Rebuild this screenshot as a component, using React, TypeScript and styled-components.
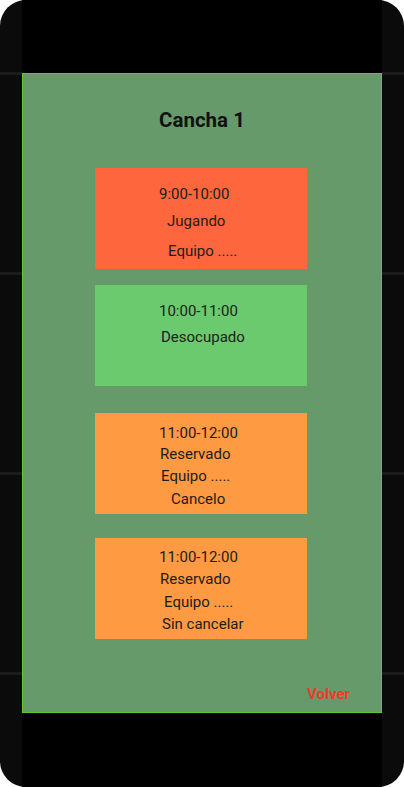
import React from "react";
import styled, { createGlobalStyle } from "styled-components";

const Global = createGlobalStyle`
  html, body { margin: 0; padding: 0; background: #ffffff; }
  body { font-family: Roboto, "Noto Sans", Arial, sans-serif; }
`;

const Phone = styled.div`
  width: 404px;
  height: 787px;
  border-radius: 26px;
  overflow: hidden;
  display: grid;
  grid-template-columns: 22px 360px 22px;
  background: #0b0b0b;
`;

const Side = styled.div`
  background: repeating-linear-gradient(
    to bottom,
    transparent 0px,
    transparent 72px,
    #1b1b1b 72px,
    #1b1b1b 75px,
    transparent 75px,
    transparent 200px
  );
`;

const Screen = styled.div`
  display: flex;
  flex-direction: column;
  background: #000;
`;

const Bar = styled.div<{ $h: number }>`
  height: ${(p) => p.$h}px;
  background: #000;
`;

const Panel = styled.div`
  height: 640px;
  box-sizing: border-box;
  border: 1px solid #5fc92a;
  background: #679a6a;
  display: flex;
  flex-direction: column;
  padding-top: 35px;
`;

const Title = styled.h1`
  margin: 0;
  text-align: center;
  font-size: 20.5px;
  line-height: 22px;
  font-weight: 700;
  color: #111;
`;

const Card = styled.div<{ $bg: string; $top: number }>`
  margin-top: ${(p) => p.$top}px;
  margin-left: 72px;
  width: 212px;
  height: 101px;
  box-sizing: border-box;
  background: ${(p) => p.$bg};
  display: flex;
  flex-direction: column;
`;

const Line = styled.div<{ $indent: number; $top: number }>`
  margin-top: ${(p) => p.$top}px;
  padding-left: ${(p) => p.$indent}px;
  font-size: 15px;
  line-height: 16px;
  color: #1c1c1c;
  white-space: nowrap;
`;

const Footer = styled.div`
  margin-top: auto;
  display: flex;
  justify-content: flex-end;
  padding: 0 31px 10px 0;
`;

const Back = styled.button`
  border: none;
  background: transparent;
  padding: 0;
  font-family: Roboto, "Noto Sans", Arial, sans-serif;
  font-size: 15px;
  line-height: 16px;
  font-weight: 700;
  color: #ee3b2b;
  cursor: pointer;
`;

type Slot = {
  bg: string;
  top: number;
  lines: { text: string; indent: number; top: number }[];
};

const slots: Slot[] = [
  {
    bg: "#fe673d",
    top: 37,
    lines: [
      { text: "9:00-10:00", indent: 64, top: 18 },
      { text: "Jugando", indent: 72, top: 11 },
      { text: "Equipo .....", indent: 73, top: 14 },
    ],
  },
  {
    bg: "#6bc96e",
    top: 16,
    lines: [
      { text: "10:00-11:00", indent: 64, top: 18 },
      { text: "Desocupado", indent: 66, top: 10 },
    ],
  },
  {
    bg: "#fe9a42",
    top: 27,
    lines: [
      { text: "11:00-12:00", indent: 64, top: 12 },
      { text: "Reservado", indent: 65, top: 5 },
      { text: "Equipo .....", indent: 66, top: 6 },
      { text: "Cancelo", indent: 76, top: 7 },
    ],
  },
  {
    bg: "#fe9a42",
    top: 24,
    lines: [
      { text: "11:00-12:00", indent: 64, top: 11 },
      { text: "Reservado", indent: 65, top: 6 },
      { text: "Equipo .....", indent: 69, top: 7 },
      { text: "Sin cancelar", indent: 67, top: 6 },
    ],
  },
];

export default function App() {
  return (
    <>
      <Global />
      <Phone>
        <Side />
        <Screen>
          <Bar $h={73} />
          <Panel>
            <Title>Cancha 1</Title>
            {slots.map((s, i) => (
              <Card key={i} $bg={s.bg} $top={s.top}>
                {s.lines.map((l, j) => (
                  <Line key={j} $indent={l.indent} $top={l.top}>
                    {l.text}
                  </Line>
                ))}
              </Card>
            ))}
            <Footer>
              <Back>Volver</Back>
            </Footer>
          </Panel>
          <Bar $h={74} />
        </Screen>
        <Side />
      </Phone>
    </>
  );
}
